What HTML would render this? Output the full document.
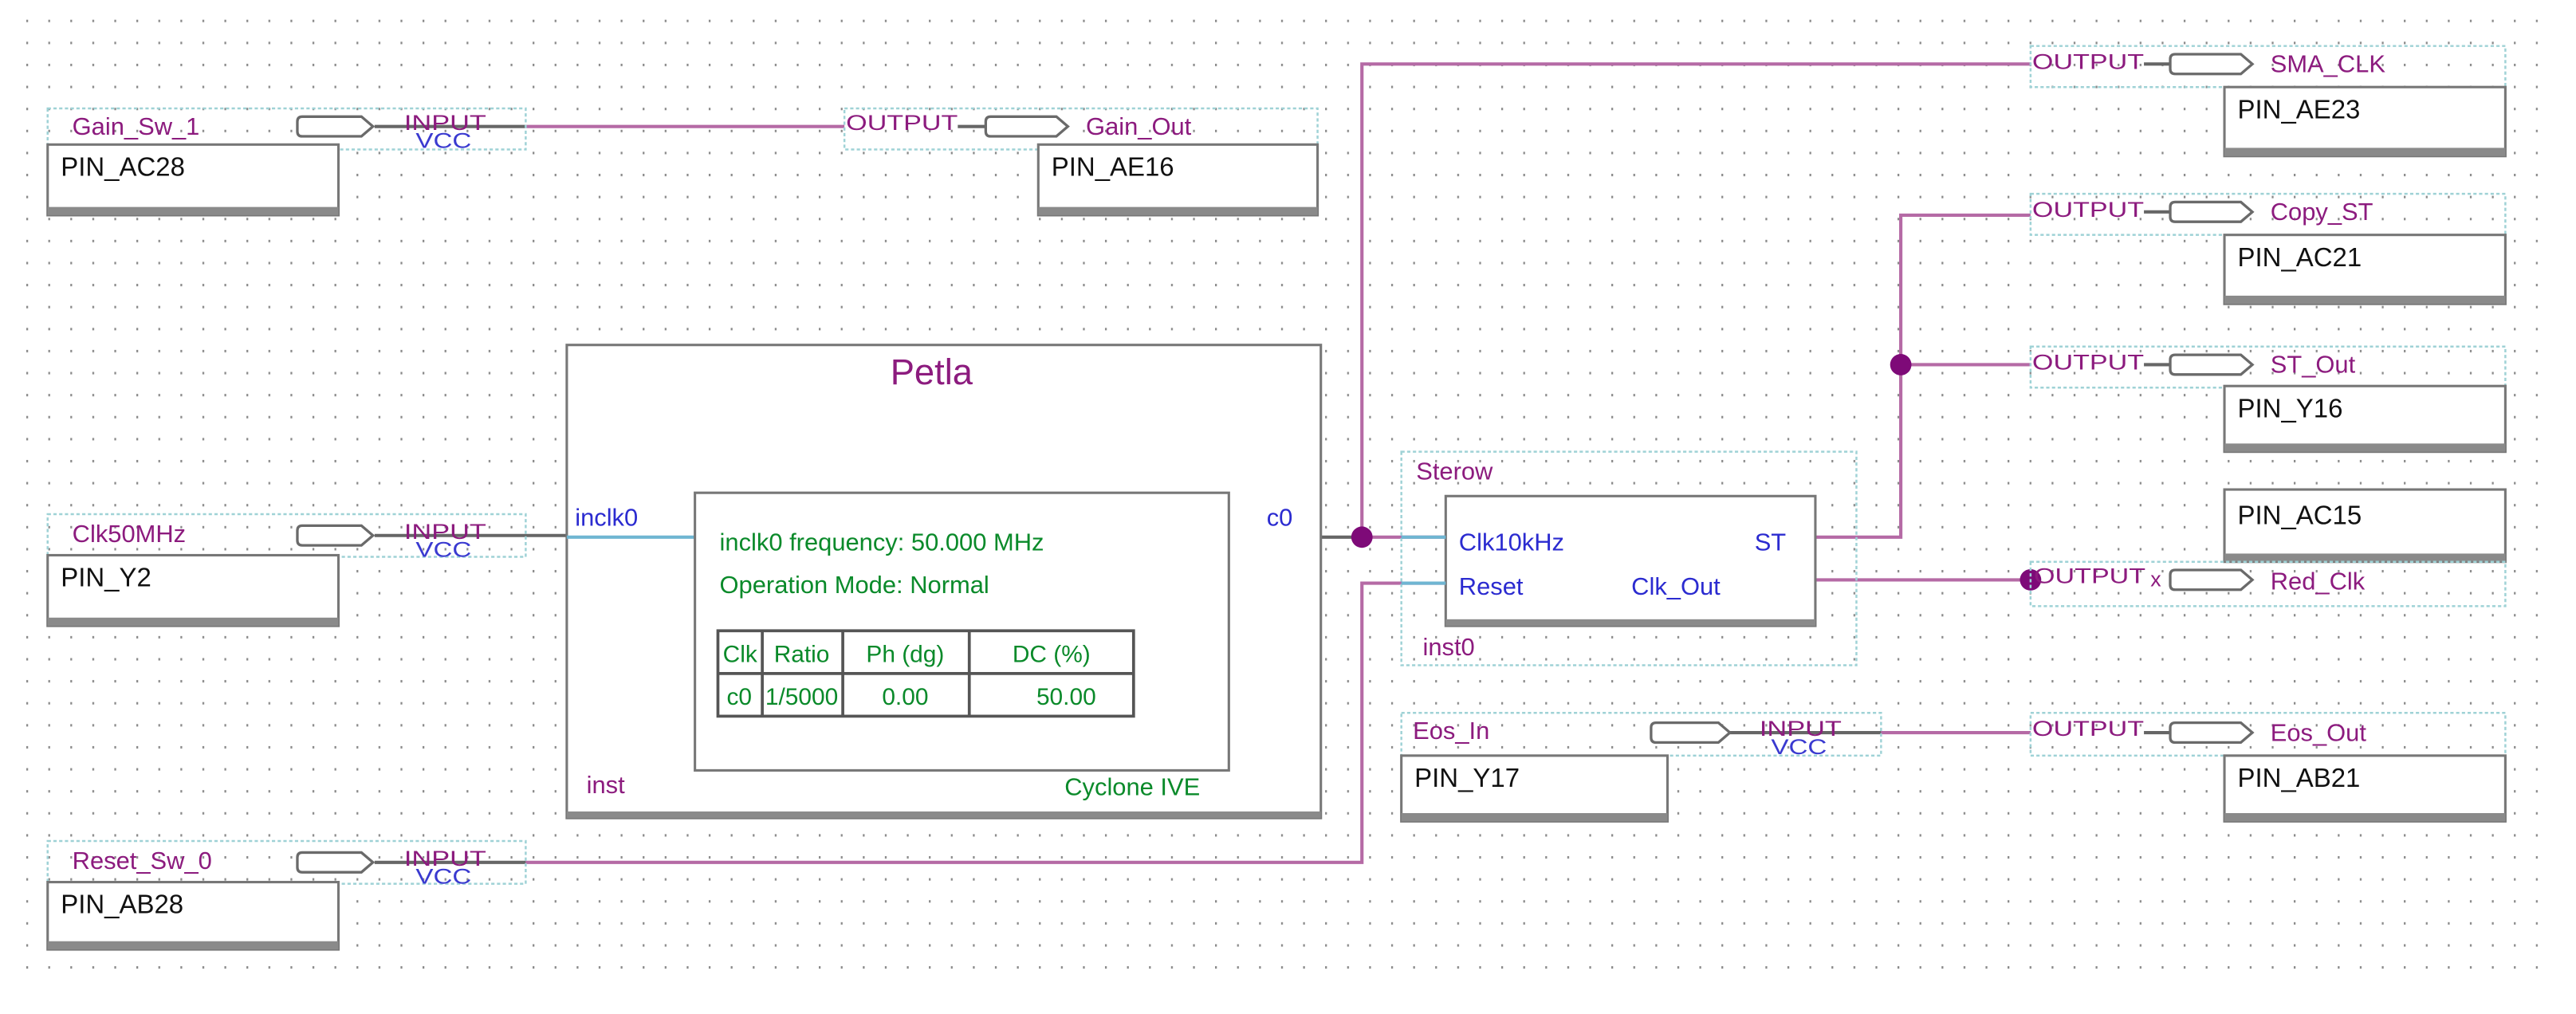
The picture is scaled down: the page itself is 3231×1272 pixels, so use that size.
<!DOCTYPE html>
<html><head><meta charset="utf-8"><style>
html,body{margin:0;padding:0;background:#fff;}
svg{display:block;}
text{font-family:"Liberation Sans",Arial,sans-serif;}
.lb{fill:#8c1b7e;font-size:15px;}
.pin{fill:#111;font-size:16px;}
.io{fill:#8c1b7e;font-size:13px;}
.vcc{fill:#3a3ad0;font-size:13px;}
.bl{fill:#2b2bd0;font-size:15px;}
.gr{fill:#0a8a2a;font-size:15px;}
.w{stroke:#b56aa5;stroke-width:2;fill:none;}
.dk{stroke:#666;stroke-width:2;fill:none;}
.dash{stroke:#9fd2d6;stroke-width:1.2;stroke-dasharray:2 1.5;fill:none;}
.box{fill:#fff;stroke:#777;stroke-width:1.5;}
.shp{fill:#fff;stroke:#6a6a6a;stroke-width:1.6;}
</style></head><body>
<svg width="3231" height="1272" viewBox="0 0 1568 617.3" preserveAspectRatio="none" xmlns="http://www.w3.org/2000/svg">
<defs>
<pattern id="g" x="16" y="12" width="13.4" height="13.4" patternUnits="userSpaceOnUse">
<rect x="0" y="-1.3" width="1.1" height="2.8" fill="#8a8a8a"/>
</pattern>
</defs>
<rect width="1568" height="617.3" fill="#fff"/>
<rect x="14" y="10" width="1538" height="583" fill="url(#g)"/>

<!-- wires -->
<path class="w" d="M320 77 H514"/>
<path class="dk" d="M228 77 H320"/>
<path class="dk" d="M228 326 H345"/>
<path class="dk" d="M228 525 H320"/>
<path class="w" d="M320 525 H829 V355 H880"/>
<path class="dk" d="M748 327 H829"/>
<path class="w" d="M829 327 H880"/>
<path class="w" d="M829 327 V39 H1236"/>
<path class="w" d="M1105 327 H1157 V131 H1236"/>
<path class="w" d="M1157 222 H1236"/>
<path class="w" d="M1105 353 H1236"/>
<path class="dk" d="M1053 446 H1145"/>
<path class="w" d="M1145 446 H1236"/>
<circle cx="829" cy="327" r="6.5" fill="#7e0a78"/>
<circle cx="1157" cy="222" r="6.5" fill="#7e0a78"/>
<circle cx="1236" cy="353" r="6.5" fill="#7e0a78"/>

<!-- Gain_Sw_1 -->
<rect class="dash" x="29" y="66" width="291" height="25"/>
<text class="lb" x="44" y="82">Gain_Sw_1</text>
<path class="shp" d="M184 71 H220 L227 77 L220 83 H184 Q181 83 181 80 V74 Q181 71 184 71Z"/>
<text class="io" x="246" y="79" textLength="50" lengthAdjust="spacingAndGlyphs">INPUT</text>
<text class="vcc" x="253" y="90" textLength="34" lengthAdjust="spacingAndGlyphs">VCC</text>
<rect class="box" x="29" y="88" width="177" height="43"/>
<rect x="29" y="126" width="177" height="5" fill="#8a8a8a"/>
<text class="pin" x="37" y="107">PIN_AC28</text>

<!-- Gain_Out -->
<rect class="dash" x="514" y="66" width="288" height="25"/>
<text class="io" x="515" y="79" textLength="68" lengthAdjust="spacingAndGlyphs">OUTPUT</text>
<path class="dk" d="M583 77 H600"/>
<path class="shp" d="M603 71 H643 L650 77 L643 83 H603 Q600 83 600 80 V74 Q600 71 603 71Z"/>
<text class="lb" x="661" y="82">Gain_Out</text>
<rect class="box" x="632" y="88" width="170" height="43"/>
<rect x="632" y="126" width="170" height="5" fill="#8a8a8a"/>
<text class="pin" x="640" y="107">PIN_AE16</text>

<!-- Clk50MHz -->
<rect class="dash" x="29" y="313" width="291" height="26"/>
<text class="lb" x="44" y="330">Clk50MHz</text>
<path class="shp" d="M184 320 H220 L227 326 L220 332 H184 Q181 332 181 329 V323 Q181 320 184 320Z"/>
<text class="io" x="246" y="328" textLength="50" lengthAdjust="spacingAndGlyphs">INPUT</text>
<text class="vcc" x="253" y="339" textLength="34" lengthAdjust="spacingAndGlyphs">VCC</text>
<rect class="box" x="29" y="338" width="177" height="43"/>
<rect x="29" y="376" width="177" height="5" fill="#8a8a8a"/>
<text class="pin" x="37" y="357">PIN_Y2</text>

<!-- Reset_Sw_0 -->
<rect class="dash" x="29" y="512" width="291" height="26"/>
<text class="lb" x="44" y="529">Reset_Sw_0</text>
<path class="shp" d="M184 519 H220 L227 525 L220 531 H184 Q181 531 181 528 V522 Q181 519 184 519Z"/>
<text class="io" x="246" y="527" textLength="50" lengthAdjust="spacingAndGlyphs">INPUT</text>
<text class="vcc" x="253" y="538" textLength="34" lengthAdjust="spacingAndGlyphs">VCC</text>
<rect class="box" x="29" y="537" width="177" height="41"/>
<rect x="29" y="573" width="177" height="5" fill="#8a8a8a"/>
<text class="pin" x="37" y="556">PIN_AB28</text>

<!-- Petla -->
<rect class="box" x="345" y="210" width="459" height="288"/>
<rect x="345" y="494" width="459" height="4" fill="#8a8a8a"/>
<text x="567" y="234" text-anchor="middle" style="fill:#8c1b7e;font-size:22px">Petla</text>
<text class="bl" x="350" y="320">inclk0</text>
<path d="M345 327 H423" stroke="#6fb6d2" stroke-width="2"/>
<text class="bl" x="771" y="320">c0</text>
<rect class="box" x="423" y="300" width="325" height="169"/>
<text class="gr" x="438" y="335">inclk0 frequency: 50.000 MHz</text>
<text class="gr" x="438" y="361">Operation Mode: Normal</text>
<g stroke="#555" stroke-width="1.8" fill="none">
<rect x="437" y="384" width="253" height="52"/>
<path d="M437 410 H690 M464 384 V436 M513 384 V436 M590 384 V436"/>
</g>
<g class="gr" style="font-size:14.5px">
<text x="440" y="403">Clk</text><text x="488" y="403" text-anchor="middle">Ratio</text>
<text x="551" y="403" text-anchor="middle">Ph (dg)</text><text x="640" y="403" text-anchor="middle">DC (%)</text>
<text x="450" y="429" text-anchor="middle">c0</text><text x="488" y="429" text-anchor="middle">1/5000</text>
<text x="551" y="429" text-anchor="middle">0.00</text><text x="649" y="429" text-anchor="middle">50.00</text>
</g>
<text x="357" y="483" style="fill:#8c1b7e;font-size:15px">inst</text>
<text x="648" y="484" style="fill:#0a8a2a;font-size:15px">Cyclone IVE</text>

<!-- Sterow -->
<rect class="dash" x="853" y="275" width="277" height="130"/>
<text class="lb" x="862" y="292">Sterow</text>
<rect class="box" x="880" y="302" width="225" height="79"/>
<rect x="880" y="377" width="225" height="4" fill="#8a8a8a"/>
<path d="M853 327 H880 M853 355 H880" stroke="#6fb6d2" stroke-width="2"/>
<text class="bl" x="888" y="335">Clk10kHz</text>
<text class="bl" x="1068" y="335">ST</text>
<text class="bl" x="888" y="362">Reset</text>
<text class="bl" x="993" y="362">Clk_Out</text>
<text class="lb" x="866" y="399">inst0</text>

<!-- Eos_In -->
<rect class="dash" x="853" y="434" width="292" height="26"/>
<text class="lb" x="860" y="450">Eos_In</text>
<path class="shp" d="M1008 440 H1046 L1053 446 L1046 452 H1008 Q1005 452 1005 449 V443 Q1005 440 1008 440Z"/>
<text class="io" x="1071" y="448" textLength="50" lengthAdjust="spacingAndGlyphs">INPUT</text>
<text class="vcc" x="1078" y="459" textLength="34" lengthAdjust="spacingAndGlyphs">VCC</text>
<rect class="box" x="853" y="460" width="162" height="40"/>
<rect x="853" y="495" width="162" height="5" fill="#8a8a8a"/>
<text class="pin" x="861" y="479">PIN_Y17</text>

<!-- right outputs -->
<g>
<rect class="dash" x="1236" y="28" width="289" height="25"/>
<text class="io" x="1237" y="42" textLength="68" lengthAdjust="spacingAndGlyphs">OUTPUT</text>
<path class="dk" d="M1305 39 H1321"/>
<path class="shp" d="M1324 33 H1364 L1371 39 L1364 45 H1324 Q1321 45 1321 42 V36 Q1321 33 1324 33Z"/>
<text class="lb" x="1382" y="44">SMA_CLK</text>
<rect class="box" x="1354" y="53" width="171" height="42"/>
<rect x="1354" y="90" width="171" height="5" fill="#8a8a8a"/>
<text class="pin" x="1362" y="72">PIN_AE23</text>
</g>
<g>
<rect class="dash" x="1236" y="118" width="289" height="25"/>
<text class="io" x="1237" y="132" textLength="68" lengthAdjust="spacingAndGlyphs">OUTPUT</text>
<path class="dk" d="M1305 129 H1321"/>
<path class="shp" d="M1324 123 H1364 L1371 129 L1364 135 H1324 Q1321 135 1321 132 V126 Q1321 123 1324 123Z"/>
<text class="lb" x="1382" y="134">Copy_ST</text>
<rect class="box" x="1354" y="143" width="171" height="42"/>
<rect x="1354" y="180" width="171" height="5" fill="#8a8a8a"/>
<text class="pin" x="1362" y="162">PIN_AC21</text>
</g>
<g>
<rect class="dash" x="1236" y="211" width="289" height="25"/>
<text class="io" x="1237" y="225" textLength="68" lengthAdjust="spacingAndGlyphs">OUTPUT</text>
<path class="dk" d="M1305 222 H1321"/>
<path class="shp" d="M1324 216 H1364 L1371 222 L1364 228 H1324 Q1321 228 1321 225 V219 Q1321 216 1324 216Z"/>
<text class="lb" x="1382" y="227">ST_Out</text>
<rect class="box" x="1354" y="235" width="171" height="40"/>
<rect x="1354" y="270" width="171" height="5" fill="#8a8a8a"/>
<text class="pin" x="1362" y="254">PIN_Y16</text>
</g>
<g>
<rect class="box" x="1354" y="298" width="171" height="44"/>
<rect x="1354" y="337" width="171" height="5" fill="#8a8a8a"/>
<text class="pin" x="1362" y="319">PIN_AC15</text>
<rect class="dash" x="1236" y="342" width="289" height="27"/>
<text class="io" x="1238" y="355" textLength="68" lengthAdjust="spacingAndGlyphs">OUTPUT</text>
<text class="io" x="1309" y="357">x</text>
<path class="shp" d="M1324 347 H1364 L1371 353 L1364 359 H1324 Q1321 359 1321 356 V350 Q1321 347 1324 347Z"/>
<text class="lb" x="1382" y="359">Red_Clk</text>
</g>
<g>
<rect class="dash" x="1236" y="434" width="289" height="26"/>
<text class="io" x="1237" y="448" textLength="68" lengthAdjust="spacingAndGlyphs">OUTPUT</text>
<path class="dk" d="M1305 446 H1321"/>
<path class="shp" d="M1324 440 H1364 L1371 446 L1364 452 H1324 Q1321 452 1321 449 V443 Q1321 440 1324 440Z"/>
<text class="lb" x="1382" y="451">Eos_Out</text>
<rect class="box" x="1354" y="460" width="171" height="40"/>
<rect x="1354" y="495" width="171" height="5" fill="#8a8a8a"/>
<text class="pin" x="1362" y="479">PIN_AB21</text>
</g>
</svg>
</body></html>
